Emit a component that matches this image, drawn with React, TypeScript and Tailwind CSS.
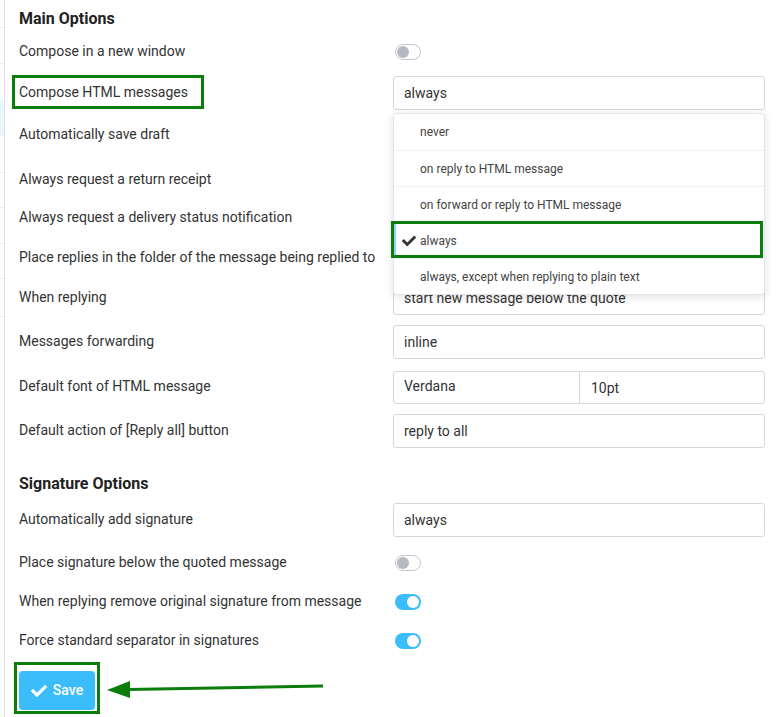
import React from 'react';

type Row = {
    label: string;
    mt: string;
    control: 'toggle-on' | 'toggle-off' | 'input' | 'font' | 'dropdown';
    value?: string;
    highlight?: boolean;
};

const MAIN_ROWS: Row[] = [
    { label: 'Compose in a new window', mt: 'mt-0', control: 'toggle-off' },
    { label: 'Compose HTML messages', mt: 'mt-[7px]', control: 'dropdown', value: 'always', highlight: true },
    { label: 'Automatically save draft', mt: 'mt-[8px]', control: 'toggle-off' },
    { label: 'Always request a return receipt', mt: 'mt-[11px]', control: 'toggle-off' },
    { label: 'Always request a delivery status notification', mt: 'mt-[4px]', control: 'toggle-off' },
    { label: 'Place replies in the folder of the message being replied to', mt: 'mt-[6px]', control: 'toggle-off' },
    { label: 'When replying', mt: 'mt-[6px]', control: 'input', value: 'start new message below the quote' },
    { label: 'Messages forwarding', mt: 'mt-[10px]', control: 'input', value: 'inline' },
    { label: 'Default font of HTML message', mt: 'mt-[11px]', control: 'font' },
    { label: 'Default action of [Reply all] button', mt: 'mt-[10px]', control: 'input', value: 'reply to all' },
];

const SIGNATURE_ROWS: Row[] = [
    { label: 'Automatically add signature', mt: 'mt-[2px]', control: 'input', value: 'always' },
    { label: 'Place signature below the quoted message', mt: 'mt-[9px]', control: 'toggle-off' },
    { label: 'When replying remove original signature from message', mt: 'mt-[5px]', control: 'toggle-on' },
    { label: 'Force standard separator in signatures', mt: 'mt-[5px]', control: 'toggle-on' },
];

const DROPDOWN_OPTIONS = [
    'never',
    'on reply to HTML message',
    'on forward or reply to HTML message',
    'always',
    'always, except when replying to plain text',
];

const CheckIcon = ({ className }: { className?: string }) => (
    <svg viewBox="0 0 512 512" className={className} fill="currentColor">
        <path d="M173.898 439.404l-166.4-166.4c-9.997-9.997-9.997-26.206 0-36.204l36.203-36.204c9.997-9.998 26.207-9.998 36.204 0L192 312.69 432.095 72.596c9.997-9.997 26.207-9.997 36.204 0l36.203 36.204c9.997 9.997 9.997 26.206 0 36.204l-294.4 294.401c-9.998 9.997-26.207 9.997-36.204-.001z" />
    </svg>
);

const Toggle = ({ on }: { on: boolean }) => (
    on ? (
        <div className="ml-[2px] w-[26px] h-[16px] rounded-full bg-[#3cbdfb] flex items-center justify-end pr-[2px]">
            <div className="w-[12px] h-[12px] rounded-full bg-white" />
        </div>
    ) : (
        <div className="ml-[2px] w-[26px] h-[16px] rounded-full bg-white border border-[#c3c7ce] flex items-center pl-[1px]">
            <div className="w-[12px] h-[12px] rounded-full bg-[#b5bac2]" />
        </div>
    )
);

const Field = ({ value }: { value: string }) => (
    <div className="h-[34px] w-full border border-[#d3d7de] rounded-[3px] bg-white flex items-center pl-[10px] text-[14px] text-[#333]">
        {value}
    </div>
);

const Dropdown = () => (
    <div className="absolute left-0 top-[37px] w-[372px] z-10 bg-white border border-[#e2e5eb] rounded-[4px] shadow-[0_2px_10px_rgba(0,0,0,0.12)]">
        {DROPDOWN_OPTIONS.map((opt, i) => {
            const selected = opt === 'always';
            return (
                <div
                    key={opt}
                    className={`relative h-[36px] flex items-center text-[12px] text-[#444] ${i > 0 ? 'border-t border-[#eef0f3]' : ''} ${selected ? 'border-l-2 border-l-[#8fd3f7]' : ''}`}
                >
                    {selected && (
                        <>
                            <CheckIcon className="absolute left-[6px] w-[14px] h-[14px] text-[#333]" />
                            <div className="absolute -left-[5px] -top-[2px] right-[1px] bottom-0 border-[3px] border-[#0b7d0b]" />
                        </>
                    )}
                    <span className={selected ? 'pl-[24px]' : 'pl-[26px]'}>{opt}</span>
                </div>
            );
        })}
    </div>
);

const Control = ({ row }: { row: Row }) => {
    switch (row.control) {
        case 'toggle-on':
            return <Toggle on />;
        case 'toggle-off':
            return <Toggle on={false} />;
        case 'font':
            return (
                <div className="h-[33px] w-full border border-[#d3d7de] rounded-[3px] flex text-[14px] text-[#333]">
                    <div className="w-[186px] border-r border-[#d3d7de] flex items-center pl-[10px] pb-[2px]">Verdana</div>
                    <div className="flex-1 flex items-center pl-[11px] pt-[3px]">10pt</div>
                </div>
            );
        case 'dropdown':
            return (
                <div className="relative w-full">
                    <Field value={row.value || ''} />
                    <Dropdown />
                </div>
            );
        default:
            return <Field value={row.value || ''} />;
    }
};

const OptionRow = ({ row }: { row: Row }) => (
    <div className={`flex items-center h-[34px] ${row.mt}`}>
        <div className="w-[374px] text-[14px] text-[#333] pb-[2px]">
            {row.highlight ? (
                <div className="-ml-[7px] w-[192px] h-[34px] border-[3px] border-[#0b7d0b] flex items-center pl-[4px]">
                    {row.label}
                </div>
            ) : (
                row.label
            )}
        </div>
        <div className="w-[372px] flex items-center">
            <Control row={row} />
        </div>
    </div>
);

const SIDEBAR_LINES = [27, 63, 135, 172, 207, 243, 278, 316];

export default function App() {
    return (
        <div className="relative w-[778px] h-[717px] bg-white flex overflow-hidden" style={{ fontFamily: 'Roboto, "Liberation Sans", sans-serif' }}>
            {/* remnants of the folder list on the left */}
            <div className="relative w-[4px] shrink-0">
                {SIDEBAR_LINES.map(y => (
                    <div key={y} className="absolute left-0 w-[4px] h-px bg-[#eceef2]" style={{ top: y }} />
                ))}
                <div className="absolute left-0 top-[100px] w-[4px] h-[35px] bg-[#eaf5fc]" />
            </div>
            <div className="flex-1 border-l border-[#dcdfe6] pl-[14px]">
                <h2 className="mt-px h-[34px] pt-[2px] flex items-center text-[16px] font-bold text-[#222]">Main Options</h2>
                {MAIN_ROWS.map(row => <OptionRow key={row.label} row={row} />)}

                <h2 className="mt-[19px] h-[34px] flex items-center text-[16px] font-bold text-[#222]">Signature Options</h2>
                {SIGNATURE_ROWS.map(row => <OptionRow key={row.label} row={row} />)}

                <div className="mt-[4px] -ml-[5px] w-[86px] h-[52px] border-[3px] border-[#0b7d0b] p-[2px] pt-[6px]">
                    <button className="w-[76px] h-[39px] rounded-[4px] bg-[#3cbdfb] text-white text-[14px] font-medium flex items-center justify-center gap-[6px]">
                        <CheckIcon className="w-[16px] h-[16px]" />
                        Save
                    </button>
                </div>
            </div>

            {/* annotation arrow */}
            <svg className="absolute left-[100px] top-[675px]" width="230" height="26" viewBox="0 0 230 26">
                <line x1="28" y1="14.5" x2="223" y2="11" stroke="#0b7d0b" strokeWidth="3" />
                <polygon points="7,15 30,6 30,23" fill="#0b7d0b" />
            </svg>
        </div>
    );
}
